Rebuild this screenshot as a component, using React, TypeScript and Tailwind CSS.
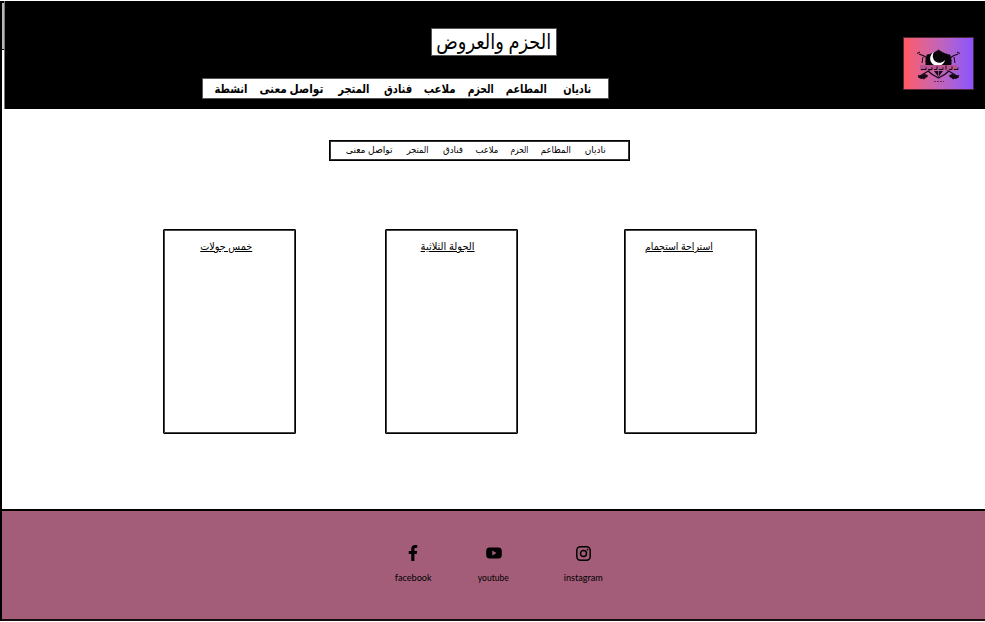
import { useLayoutEffect, useRef, useState } from "react";
import { FaFacebookF } from "react-icons/fa";

type Word = { text: string; box: string };

const mainNav: Word[] = [
  { text: "انشطة", box: "w-[33px] ml-[11px]" },
  { text: "تواصل معنى", box: "w-[64px] ml-[12px]" },
  { text: "المتجر", box: "w-[31px] ml-[15px]" },
  { text: "فنادق", box: "w-[28px] ml-[15px]" },
  { text: "ملاعب", box: "w-[32px] ml-[12px]" },
  { text: "الحزم", box: "w-[26px] ml-[12px]" },
  { text: "المطاعم", box: "w-[41px] ml-[12px]" },
  { text: "ناديان", box: "w-[28px] ml-[16px]" },
];

const subNav: Word[] = [
  { text: "تواصل معنى", box: "w-[47px] ml-[15px]" },
  { text: "المتجر", box: "w-[22px] ml-[14px]" },
  { text: "فنادق", box: "w-[20px] ml-[14px]" },
  { text: "ملاعب", box: "w-[23px] ml-[12px]" },
  { text: "الحزم", box: "w-[18px] ml-[12px]" },
  { text: "المطاعم", box: "w-[30px] ml-[13px]" },
  { text: "ناديان", box: "w-[21px] ml-[14px]" },
];

const cards: (Word & { place: string })[] = [
  { text: "خمس جولات", box: "w-[52px] ml-[35px]", place: "ml-[163px] w-[133px]" },
  { text: "الجولة الثلاثية", box: "w-[54px] ml-[34px]", place: "ml-[89px] w-[133px]" },
  { text: "استراحة استجمام", box: "w-[68px] ml-[19px]", place: "ml-[106px] w-[133px]" },
];

/* Label condensed or widened to fill its box exactly */
function Fit({ text, box, className = "" }: Word & { className?: string }) {
  const outer = useRef<HTMLSpanElement>(null);
  const inner = useRef<HTMLSpanElement>(null);
  const [scale, setScale] = useState(1);
  useLayoutEffect(() => {
    if (outer.current && inner.current) {
      setScale(outer.current.offsetWidth / inner.current.getBoundingClientRect().width);
    }
  }, []);
  return (
    <span ref={outer} className={`flex shrink-0 justify-center ${box}`}>
      <span
        ref={inner}
        className={`block shrink-0 whitespace-nowrap ${className}`}
        style={{ transform: `scaleX(${scale})` }}
      >
        {text}
      </span>
    </span>
  );
}

function Logo() {
  return (
    <div className="flex h-[53px] w-[71px] items-center justify-center border border-[#512538] bg-linear-to-r from-[#ff5860] to-[#8b52ff]">
      <svg viewBox="0 0 71 53" className="h-[53px] w-[71px] shrink-0" fill="none" stroke="#150914">
        <path d="M16 17l5 2 33 20M55 17l-5 2-33 20" strokeWidth="1.2" />
        <path d="M14 16.500l3-1.500M57 16.500l-3-1.500M20 20l-1 6M51 20l1 6" strokeWidth="1" />
        <path d="M24 18q6-1 11.500-5q5.500 4 11.500 5q2 5 1 10h-25q-1-5 1-10z" fill="#080408" strokeWidth="1" strokeDasharray="2 1" />
        <path d="M31 15a7.500 7.500 0 1 0 11 8a6.500 6.500 0 1 1-11-8z" fill="#fff" stroke="none" />
        <path d="M25 34q4 4 10.500 7q6.500-3 10.500-7" strokeWidth="1.200" />
        <path d="M31 34l4.500 6l4.500-6z" fill="#150914" stroke="none" />
        <rect x="17" y="28" width="37" height="5.500" fill="#b85590" stroke="none" />
        <path d="M18 32.500h5v-2m2 2h4v-2m2 2h3v-3m2 3h4v-2m3 2v-4m3 4h3v-3m2 3h4v-2" strokeWidth="1" />
        <path d="M35.500 34v5" stroke="#9f477f" />
        <path d="M15 38q2 2 7-1l3 2-4 3-5-1zM56 38q-2 2-7-1l-3 2 4 3 5-1z" fill="#150914" strokeWidth=".8" strokeDasharray="2 1" />
        <path d="M31 44.500h10" stroke="#65304f" strokeDasharray="2 1" />
      </svg>
    </div>
  );
}

function Youtube() {
  return (
    <svg viewBox="0 0 16 12" className="h-[12px] w-[16px]">
      <path fillRule="evenodd" d="M3 .6Q8 .2 13 .6Q15.500.8 15.700 3Q16 6 15.700 9Q15.500 11.200 13 11.400Q8 11.800 3 11.400Q.5 11.200.3 9Q0 6 .3 3Q.5.8 3 .6zM6.300 3.600v4.800L10.500 6z" />
    </svg>
  );
}

function Instagram() {
  return (
    <svg viewBox="0 0 15 15" className="h-[15px] w-[15px]" fill="none" stroke="black" strokeWidth="1.500">
      <rect x=".8" y=".8" width="13.400" height="13.400" rx="3.600" />
      <circle cx="7.500" cy="7.500" r="3" />
      <circle cx="11.500" cy="3.600" r=".9" fill="black" stroke="none" />
    </svg>
  );
}

export default function App() {
  return (
    <div className="flex h-[622px] w-[985px] flex-col overflow-hidden bg-white pt-px font-['Open_Sans','Noto_Sans','DejaVu_Sans',sans-serif] text-black">
      <header className="flex h-[108px] shrink-0">
        <div className="w-[4px] shrink-0 border-l-2 border-black">
          <div className="h-[49px] border-y border-t-2 border-black bg-[#b8b8b8]" />
        </div>
        <div className="flex grow border-l border-[#777] bg-black">
          <div className="w-[606px] shrink-0 pt-[27px]">
            <h1 className="ml-[426px] flex h-[28px] w-[126px] items-center border border-[#555] bg-white">
              <Fit text="الحزم والعروض" box="w-[115px] ml-[4px]" className="-mt-[2px] text-[21px] leading-[26px]" />
            </h1>
            <nav className="mt-[22px] ml-[197px] flex h-[21px] w-[407px] items-center border border-[#555] bg-white">
              {mainNav.map((w) => (
                <Fit key={w.text} {...w} className="text-[12px] leading-[18px] font-bold" />
              ))}
            </nav>
          </div>
          <div className="mt-[36px] ml-[292px]">
            <Logo />
          </div>
        </div>
      </header>

      <main className="h-[400px] shrink-0 border-l-2 border-black pt-[31px]">
        <nav className="ml-[327px] flex h-[21px] w-[301px] items-center border border-black bg-white pl-px shadow-[inset_0_0_0_1px_#333]">
          {subNav.map((w) => (
            <Fit key={w.text} {...w} className="-mt-[2px] text-[9.5px] leading-[15px]" />
          ))}
        </nav>
        <div className="mt-[68px] -ml-[2px] flex">
          {cards.map((c) => (
            <section key={c.text} className={`h-[205px] shrink-0 rounded-[1px] border border-black pt-[9px] pl-px shadow-[inset_0_0_0_1px_#444] ${c.place}`}>
              <Fit text={c.text} box={c.box} className="text-[10.5px] leading-[15px] underline" />
            </section>
          ))}
        </div>
      </main>

      <footer className="flex h-[112px] shrink-0 border-y-2 border-l-2 border-t-black border-b-[#160c10] border-l-black bg-[#a35d79] pt-[34px] font-['Lato',sans-serif]">
        <div className="ml-[392px] flex w-[38px] flex-col items-center">
          <div className="flex h-[16px] items-center"><FaFacebookF className="h-[16px] w-[10px]" /></div>
          <Fit text="facebook" box="w-[37px] mt-[11px]" className="text-[9px] leading-[12px]" />
        </div>
        <div className="ml-[45px] flex w-[33px] flex-col items-center">
          <div className="flex h-[16px] items-center"><Youtube /></div>
          <Fit text="youtube" box="w-[31px] mt-[11px]" className="text-[9px] leading-[12px]" />
        </div>
        <div className="ml-[53px] flex w-[40px] flex-col items-center">
          <div className="flex h-[16px] items-center"><Instagram /></div>
          <Fit text="instagram" box="w-[39px] mt-[11px]" className="text-[9px] leading-[12px]" />
        </div>
      </footer>
    </div>
  );
}
